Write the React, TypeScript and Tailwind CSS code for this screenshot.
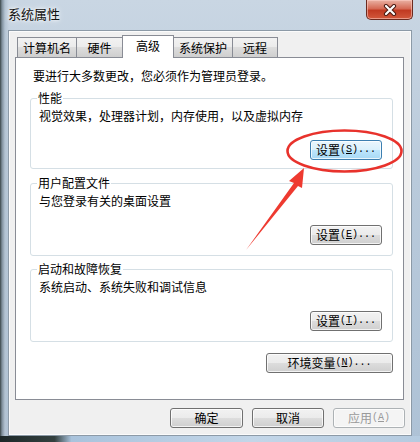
import type { ReactNode } from "react";

const font = "font-['Noto_Sans_CJK_SC',sans-serif]";

const tabs = [
  { label: "计算机名", width: "w-[60px]" },
  { label: "硬件", width: "w-[47px]" },
  { label: "高级", width: "w-[52px]", active: true },
  { label: "系统保护", width: "w-[60px]" },
  { label: "远程", width: "w-[46px]" },
];

const groups = [
  { title: "性能", text: "视觉效果，处理器计划，内存使用，以及虚拟内存", key: "S", focused: true, height: "h-[71px]", gap: "mt-[14px]" },
  { title: "用户配置文件", text: "与您登录有关的桌面设置", key: "E", height: "h-[73px]", gap: "mt-[14px]" },
  { title: "启动和故障恢复", text: "系统启动、系统失败和调试信息", key: "T", height: "h-[73px]", gap: "mt-[13px]" },
];

function Mnemonic({ k, dots = true }: { k: string; dots?: boolean }) {
  return (
    <span className="font-['Liberation_Mono',monospace] text-[10px]">
      (<span className="underline">{k}</span>){dots ? "..." : ""}
    </span>
  );
}

function WinButton({
  children,
  className = "",
  focused,
  disabled,
}: {
  children: ReactNode;
  className?: string;
  focused?: boolean;
  disabled?: boolean;
}) {
  const look = disabled
    ? "border-[#adb2b5] bg-[#f4f4f4] text-[#9a9a9a]"
    : focused
      ? "border-[#3c7fb1] bg-[linear-gradient(to_bottom,#eaf6fd_0%,#d9f0fc_50%,#bee6fd_50%,#a7d9f5_100%)] text-black"
      : "border-[#707070] bg-[linear-gradient(to_bottom,#f2f2f2_0%,#ebebeb_50%,#dddddd_50%,#cfcfcf_100%)] text-black";
  return (
    <div
      className={`flex h-[20px] items-center justify-center rounded-[3px] border text-[12px] leading-[16px] shadow-[inset_0_0_0_1px_rgba(255,255,255,0.75)] ${look} ${className}`}
    >
      {children}
    </div>
  );
}

export default function App() {
  return (
    <div
      className={`relative flex h-[442px] w-[420px] flex-col overflow-hidden bg-[linear-gradient(to_right,#3a4648_0px,#7f8f9c_2px,#b3c3d2_5px,transparent_9px),linear-gradient(to_bottom,#c9d6e3,#b9cadb_40%,#aec2d6)] text-black ${font}`}
    >
      {/* title bar */}
      <div className="flex h-[30px] shrink-0 items-start">
        <span className="pl-[8px] pt-[6px] text-[13px] leading-[16px] text-[#111] [text-shadow:0_0_6px_#ffffff,0_0_3px_#ffffff]">
          系统属性
        </span>
        <div className="ml-auto mr-[7px] flex h-[20px] w-[47px] items-center justify-center rounded-b-[5px] border border-t-0 border-[#6b2a1f] bg-[linear-gradient(to_bottom,#eab2a4_0%,#d56a55_45%,#c13a22_55%,#d2583c_100%)] shadow-[inset_0_0_0_1px_rgba(255,210,200,0.55)]">
          <svg width="14" height="12" viewBox="0 0 14 12">
            <path d="M3 2 L11 10 M11 2 L3 10" stroke="#4a1a12" strokeWidth="4.2" strokeLinecap="round" />
            <path d="M3 2 L11 10 M11 2 L3 10" stroke="#ffffff" strokeWidth="2.2" strokeLinecap="round" />
          </svg>
        </div>
      </div>

      {/* client area */}
      <div className="mx-[8px] flex h-[406px] shrink-0 flex-col border border-[#8c9aa7] bg-[#f0f0f0] shadow-[inset_0_0_0_1px_#fbfbfb]">
        {/* tabs */}
        <div className="ml-[8px] mt-[4px] flex h-[23px] items-end">
          {tabs.map((t, i) => (
            <div
              key={t.label}
              className={`${t.width} ${i > 0 ? "-ml-px" : ""} flex items-center border border-[#898c95] text-[12px] leading-[16px] ${
                t.active
                  ? "relative z-10 h-[23px] justify-center border-b-0 bg-white pb-[3px]"
                  : "h-[21px] justify-center bg-[linear-gradient(to_bottom,#f2f2f2_0%,#ebebeb_50%,#dddddd_50%,#cfcfcf_100%)] pt-px"
              }`}
            >
              {t.label}
            </div>
          ))}
        </div>

        {/* tab panel */}
        <div className="-mt-px ml-[6px] flex h-[343px] w-[389px] flex-col border border-[#898c95] bg-white">
          <p className="pl-[17px] pt-[10px] text-[12px] leading-[16px]">
            要进行大多数更改，您必须作为管理员登录。
          </p>

          {groups.map((g) => (
            <div
              key={g.title}
              className={`relative ${g.gap} ml-[14px] flex ${g.height} w-[363px] flex-col rounded-[3px] border border-[#d5dfe5]`}
            >
              <span className="absolute -top-[9px] left-[6px] bg-white px-px text-[12px] leading-[16px]">
                {g.title}
              </span>
              <p className="pl-[8px] pt-[9px] text-[12px] leading-[16px]">{g.text}</p>
              <WinButton focused={g.focused} className="mr-[10px] mt-[16px] w-[72px] self-end">
                设置<Mnemonic k={g.key} />
              </WinButton>
            </div>
          ))}

          <WinButton className="mr-[10px] mt-[11px] w-[127px] self-end">
            环境变量<Mnemonic k="N" />
          </WinButton>
        </div>

        {/* dialog buttons */}
        <div className="mt-[8px] flex justify-end gap-[9px] pr-[6px]">
          <WinButton className="w-[73px]">确定</WinButton>
          <WinButton className="w-[72px]">取消</WinButton>
          <WinButton disabled className="w-[72px]">
            应用<Mnemonic k="A" dots={false} />
          </WinButton>
        </div>
      </div>

      {/* bottom frame */}
      <div className="h-[6px] shrink-0 bg-[linear-gradient(to_right,#1d2829_0%,#33403f_13%,#a9c3dc_17%,#c3d6e8_60%,#b5cbe0_100%)]" />

      {/* red annotation */}
      <svg className="pointer-events-none absolute left-0 top-0" width="420" height="442" viewBox="0 0 420 442">
        <ellipse cx="344.5" cy="151" rx="57" ry="20.5" fill="none" stroke="#e8322c" strokeWidth="2.6" />
        <polygon points="304,168 289,181 294,183 246,250 298,186 302,188" fill="#ee3a30" />
      </svg>
    </div>
  );
}
